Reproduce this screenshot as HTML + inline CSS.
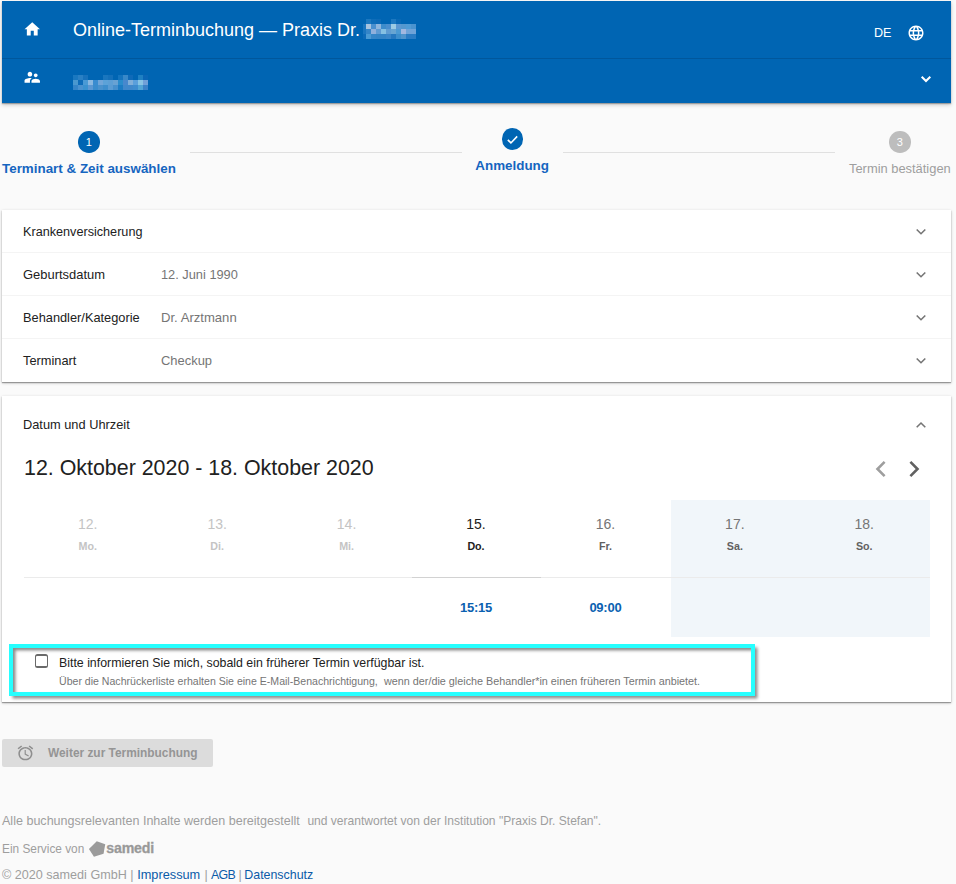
<!DOCTYPE html>
<html lang="de">
<head>
<meta charset="utf-8">
<title>Online-Terminbuchung</title>
<style>
*{box-sizing:border-box;margin:0;padding:0}
html,body{width:956px;height:884px;overflow:hidden;background:#fafafa;font-family:"Liberation Sans",Arial,sans-serif;color:#212121}
body{position:relative}
.abs{position:absolute}
.hdr{left:2px;top:1px;width:949px;height:102px;background:#0065b3;box-shadow:0 1px 1px rgba(0,0,0,.25),0 2px 4px rgba(0,0,0,.2)}
.hdr .div{position:absolute;left:0;right:0;top:57px;height:1px;background:#00579c}
.title{left:73px;top:19px;font-size:18px;color:#fff;white-space:nowrap;line-height:22px}
.de{left:874px;top:26px;font-size:12.600px;color:#fff;line-height:15px}
.card{left:2px;width:949px;background:#fff;box-shadow:0 1px 1px rgba(0,0,0,.3),0 1px 3px rgba(0,0,0,.22)}
.row{position:absolute;left:0;width:949px;height:43px;border-bottom:1px solid #f4f4f4}
.lbl{position:absolute;left:21px;top:14px;font-size:12.8px;line-height:15px;color:#212121;white-space:nowrap}
.val{position:absolute;left:159px;top:14px;font-size:12.8px;line-height:15px;color:#757575;white-space:nowrap}
.step{font-size:13.400px;line-height:15px;white-space:nowrap}
.t{white-space:nowrap}
.day{text-align:center}
.dn{font-size:14px;line-height:16px;margin-left:-2px}
.dw{font-size:10.700px;line-height:13px;font-weight:bold;margin-top:8px;margin-left:-2px}
.tm{text-align:center;font-size:13px;line-height:15px;font-weight:bold;color:#0b61b1;margin-left:-1px;letter-spacing:-0.250px}
</style>
</head>
<body>
<div class="abs hdr"><div class="div"></div></div>
<svg class="abs" style="left:23.300px;top:20.300px" width="18.500" height="18.500" viewBox="0 0 24 24"><path fill="#fff" d="M10 20v-6h4v6h5v-8h3L12 3 2 12h3v8z"/></svg>
<div class="abs title">Online-Terminbuchung — Praxis Dr.</div>
<div class="abs de">DE</div>
<svg class="abs" style="left:906.500px;top:24.100px" width="18" height="18" viewBox="0 0 24 24"><path fill="#fff" d="M11.99 2C6.47 2 2 6.48 2 12s4.47 10 9.99 10C17.52 22 22 17.52 22 12S17.52 2 11.99 2zm6.93 6h-2.95c-.32-1.25-.78-2.45-1.38-3.56 1.84.63 3.37 1.91 4.33 3.56zM12 4.04c.83 1.2 1.48 2.53 1.91 3.96h-3.82c.43-1.43 1.08-2.76 1.91-3.96zM4.26 14C4.1 13.36 4 12.69 4 12s.1-1.36.26-2h3.38c-.08.66-.14 1.32-.14 2 0 .68.06 1.34.14 2H4.26zm.82 2h2.95c.32 1.25.78 2.45 1.38 3.56-1.84-.63-3.37-1.9-4.33-3.56zm2.95-8H5.08c.96-1.66 2.49-2.93 4.33-3.56C8.810 5.55 8.350 6.75 8.030 8zM12 19.960c-.83-1.2-1.48-2.53-1.91-3.96h3.82c-.43 1.430-1.080 2.760-1.910 3.960zM14.340 14H9.660c-.09-.66-.16-1.320-.16-2 0-.68.070-1.350.160-2h4.680c.09.650.160 1.320.160 2 0 .68-.070 1.340-.160 2zm.25 5.560c.6-1.110 1.060-2.310 1.380-3.560h2.950c-.96 1.650-2.490 2.930-4.330 3.560zM16.360 14c.08-.66.140-1.320.140-2 0-.68-.060-1.340-.140-2h3.380c.16.640.26 1.310.26 2s-.1 1.360-.26 2h-3.380z"/></svg>
<svg class="abs" style="left:23.300px;top:67.700px" width="18.500" height="18.500" viewBox="0 0 24 24"><path fill="#fff" d="M16.500 12c1.380 0 2.490-1.120 2.490-2.500S17.880 7 16.500 7C15.120 7 14 8.120 14 9.500s1.120 2.500 2.500 2.500zM9 11c1.660 0 2.990-1.340 2.990-3S10.660 5 9 5C7.340 5 6 6.340 6 8s1.340 3 3 3zm7.500 3c-1.830 0-5.500.920-5.500 2.750V19h11v-2.250c0-1.830-3.670-2.750-5.500-2.750zM9 13c-2.330 0-7 1.170-7 3.500V19h7v-2.250c0-.850.330-2.340 2.370-3.470C10.500 13.100 9.660 13 9 13z"/></svg>
<svg class="abs" style="left:919px;top:74px" width="14" height="10" viewBox="0 0 14 10"><path fill="none" stroke="#fff" stroke-width="2" d="M2.700 2.700l4.300 4.300 4.300-4.300"/></svg>

<svg class="abs" style="left:0;top:0" width="956" height="104" viewBox="0 0 956 104" shape-rendering="crispEdges"><rect x="366" y="19" width="5" height="5" fill="#1c78c0"/><rect x="371" y="19" width="5" height="5" fill="#0e6db9"/><rect x="376" y="19" width="5" height="5" fill="#0c6ab7"/><rect x="391" y="19" width="5" height="5" fill="#1c78c0"/><rect x="396" y="19" width="5" height="5" fill="#0868b5"/><rect x="363" y="24" width="3" height="5" fill="#1a76c0"/><rect x="366" y="24" width="5" height="5" fill="#a8c4e0"/><rect x="371" y="24" width="5" height="5" fill="#4a90cf"/><rect x="376" y="24" width="5" height="5" fill="#8fb6dd"/><rect x="381" y="24" width="5" height="5" fill="#3d8ccb"/><rect x="386" y="24" width="5" height="5" fill="#4a8ecd"/><rect x="391" y="24" width="5" height="5" fill="#9ccbe4"/><rect x="396" y="24" width="5" height="5" fill="#5c98d2"/><rect x="401" y="24" width="5" height="5" fill="#5598cf"/><rect x="406" y="24" width="5" height="5" fill="#509bd5"/><rect x="411" y="24" width="5" height="5" fill="#4a93cf"/><rect x="363" y="29" width="3" height="5" fill="#1a76c0"/><rect x="366" y="29" width="5" height="5" fill="#3585c8"/><rect x="371" y="29" width="5" height="5" fill="#8fb0dc"/><rect x="376" y="29" width="5" height="5" fill="#5f9bd3"/><rect x="381" y="29" width="5" height="5" fill="#85c0e2"/><rect x="386" y="29" width="5" height="5" fill="#5f9cd2"/><rect x="391" y="29" width="5" height="5" fill="#68a5d2"/><rect x="396" y="29" width="5" height="5" fill="#4c9ad3"/><rect x="401" y="29" width="5" height="5" fill="#a3b8e0"/><rect x="406" y="29" width="5" height="5" fill="#6fa3d8"/><rect x="411" y="29" width="5" height="5" fill="#6fa3d8"/><rect x="363" y="34" width="3" height="5" fill="#0c6ab8"/><rect x="366" y="34" width="5" height="5" fill="#4a9ad3"/><rect x="371" y="34" width="5" height="5" fill="#3586c8"/><rect x="376" y="34" width="5" height="5" fill="#3384c6"/><rect x="381" y="34" width="5" height="5" fill="#3384c6"/><rect x="386" y="34" width="5" height="5" fill="#3a86c8"/><rect x="391" y="34" width="5" height="5" fill="#2678bf"/><rect x="396" y="34" width="5" height="5" fill="#3d8ecb"/><rect x="401" y="34" width="5" height="5" fill="#4f94cc"/><rect x="406" y="34" width="5" height="5" fill="#2a7cc4"/><rect x="411" y="34" width="5" height="5" fill="#2a7cc4"/><rect x="73" y="75" width="5" height="5" fill="#1a78c0"/><rect x="78" y="75" width="5" height="5" fill="#2a80c4"/><rect x="83" y="75" width="5" height="5" fill="#1872bc"/><rect x="103" y="75" width="5" height="5" fill="#1a76be"/><rect x="108" y="75" width="5" height="5" fill="#1470ba"/><rect x="118" y="75" width="5" height="5" fill="#1474be"/><rect x="123" y="75" width="5" height="5" fill="#3888c8"/><rect x="128" y="75" width="5" height="5" fill="#0f6ab8"/><rect x="138" y="75" width="5" height="5" fill="#1f80c2"/><rect x="143" y="75" width="5" height="5" fill="#0a66b6"/><rect x="73" y="80" width="5" height="5" fill="#4a98cf"/><rect x="78" y="80" width="5" height="5" fill="#0e6cb9"/><rect x="83" y="80" width="5" height="5" fill="#4a9ad5"/><rect x="88" y="80" width="5" height="5" fill="#8ab8e0"/><rect x="93" y="80" width="5" height="5" fill="#3a8cd0"/><rect x="98" y="80" width="5" height="5" fill="#70a5d8"/><rect x="103" y="80" width="5" height="5" fill="#5ca2d8"/><rect x="108" y="80" width="5" height="5" fill="#5c9fd5"/><rect x="113" y="80" width="5" height="5" fill="#68a2d3"/><rect x="118" y="80" width="5" height="5" fill="#2a8ccb"/><rect x="123" y="80" width="5" height="5" fill="#4888cd"/><rect x="128" y="80" width="5" height="5" fill="#80aed8"/><rect x="133" y="80" width="5" height="5" fill="#5a9fdb"/><rect x="138" y="80" width="5" height="5" fill="#88c4e4"/><rect x="143" y="80" width="5" height="5" fill="#70a0d8"/><rect x="73" y="85" width="5" height="5" fill="#3585c8"/><rect x="78" y="85" width="5" height="5" fill="#4a92cf"/><rect x="83" y="85" width="5" height="5" fill="#3a92d0"/><rect x="88" y="85" width="5" height="5" fill="#5c98d3"/><rect x="93" y="85" width="5" height="5" fill="#3a8ccd"/><rect x="98" y="85" width="5" height="5" fill="#4a92cd"/><rect x="103" y="85" width="5" height="5" fill="#3d8ecd"/><rect x="108" y="85" width="5" height="5" fill="#5a9cd3"/><rect x="113" y="85" width="5" height="5" fill="#4690cd"/><rect x="118" y="85" width="5" height="5" fill="#1c7cc4"/><rect x="123" y="85" width="5" height="5" fill="#4088cb"/><rect x="128" y="85" width="5" height="5" fill="#4088cb"/><rect x="133" y="85" width="5" height="5" fill="#3d8ccf"/><rect x="138" y="85" width="5" height="5" fill="#52a5d5"/><rect x="143" y="85" width="5" height="5" fill="#3a82c8"/></svg>
<!-- stepper -->
<div class="abs" style="left:78px;top:131.400px;width:21.600px;height:21.600px;border-radius:50%;background:#0065b3;color:#fff;font-size:11px;line-height:22px;text-align:center">1</div>
<div class="abs step" style="left:2px;top:161px;color:#1565c0;font-weight:bold">Terminart &amp; Zeit auswählen</div>
<div class="abs" style="left:190px;top:152px;width:272px;height:1px;background:#e0e0e0"></div>
<div class="abs" style="left:501.700px;top:128.200px;width:21.500px;height:21.600px;border-radius:50%;background:#0065b3"></div>
<svg class="abs" style="left:505px;top:131.500px" width="15" height="15" viewBox="0 0 24 24"><path fill="none" stroke="#fff" stroke-width="2.6" d="M4.500 12.500l5 5 10-10.500"/></svg>
<div class="abs step" style="left:475.300px;top:158px;color:#1565c0;font-weight:bold">Anmeldung</div>
<div class="abs" style="left:563px;top:152px;width:272px;height:1px;background:#e0e0e0"></div>
<div class="abs" style="left:889px;top:131.400px;width:21.600px;height:21.600px;border-radius:50%;background:#bdbdbd;color:#fff;font-size:11px;line-height:22px;text-align:center">3</div>
<div class="abs step" style="left:849px;top:161px;color:#9e9e9e;font-size:12.900px">Termin bestätigen</div>

<!-- card 1 -->
<div class="abs card" style="top:210px;height:172px">
  <div class="row" style="top:0"><span class="lbl" style="font-size:12.650px;top:14.700px">Krankenversicherung</span></div>
  <div class="row" style="top:43px"><span class="lbl" style="font-size:12.950px">Geburtsdatum</span><span class="val">12. Juni 1990</span></div>
  <div class="row" style="top:86px"><span class="lbl">Behandler/Kategorie</span><span class="val" style="font-size:13.100px">Dr. Arztmann</span></div>
  <div class="row" style="top:129px;border-bottom:0"><span class="lbl">Terminart</span><span class="val" style="font-size:12.950px">Checkup</span></div>
</div>

<!-- card 2 -->
<div class="abs card" style="top:396px;height:306px">
  <span class="lbl" style="top:21px">Datum und Uhrzeit</span>
</div>
<div class="abs t" style="left:24px;top:456px;font-size:21.4px;line-height:24px;color:#212121">12. Oktober 2020 - 18. Oktober 2020</div>

<div class="abs" style="left:671px;top:500px;width:259px;height:137px;background:#f1f6fa"></div>
<div class="abs" style="left:24px;top:577px;width:906px;height:1px;background:#ebebeb"></div>
<div class="abs" style="left:412px;top:577px;width:129px;height:1px;background:#d2d2d2"></div>

<div class="abs day" style="left:24.00px;top:515.500px;width:129.43px;color:#c4c4c4"><div class="dn">12.</div><div class="dw" style="color:#c4c4c4">Mo.</div></div>
<div class="abs day" style="left:153.43px;top:515.500px;width:129.43px;color:#c4c4c4"><div class="dn">13.</div><div class="dw" style="color:#c4c4c4">Di.</div></div>
<div class="abs day" style="left:282.86px;top:515.500px;width:129.43px;color:#c4c4c4"><div class="dn">14.</div><div class="dw" style="color:#c4c4c4">Mi.</div></div>
<div class="abs day" style="left:412.29px;top:515.500px;width:129.43px;color:#212121"><div class="dn">15.</div><div class="dw" style="color:#212121">Do.</div></div>
<div class="abs day" style="left:541.71px;top:515.500px;width:129.43px;color:#757575"><div class="dn">16.</div><div class="dw" style="color:#616161">Fr.</div></div>
<div class="abs day" style="left:671.14px;top:515.500px;width:129.43px;color:#757575"><div class="dn">17.</div><div class="dw" style="color:#616161">Sa.</div></div>
<div class="abs day" style="left:800.57px;top:515.500px;width:129.43px;color:#757575"><div class="dn">18.</div><div class="dw" style="color:#616161">So.</div></div>
<div class="abs tm" style="left:412.300px;top:600px;width:129.4px">15:15</div>
<div class="abs tm" style="left:541.700px;top:600px;width:129.4px">09:00</div>
<div class="abs" style="left:9px;top:644px;width:746px;height:52px;border:4px solid #26ffff;box-shadow:2.500px 2.500px 3px rgba(0,0,0,.45), inset 2.500px 2.500px 3px rgba(0,0,0,.45)"></div>
<div class="abs" style="left:34.600px;top:654.200px;width:13.500px;height:14px;border:solid #6a6a6a;border-width:2px 1.600px;border-radius:2.500px"></div>
<div class="abs t" style="left:59px;top:656px;font-size:12.350px;line-height:15px;color:#212121">Bitte informieren Sie mich, sobald ein früherer Termin verfügbar ist.</div>
<div class="abs t" style="left:59px;top:675px;font-size:10.700px;line-height:12px;color:#757575"><span style="font-size:10.570px;line-height:0">Über die Nachrückerliste erhalten Sie eine E-Mail-Benachrichtigung,</span></div>
<div class="abs t" style="left:384px;top:675px;font-size:10.700px;line-height:12px;color:#757575"><span style="font-size:10.810px;line-height:0">wenn der/die gleiche Behandler*in einen früheren Termin anbietet.</span></div>
<svg class="abs" style="left:915px;top:227.5px" width="12" height="8" viewBox="0 0 12 8"><path fill="none" stroke="#757575" stroke-width="1.6" d="M1.700 1.500L6 5.700l4.300-4.200"/></svg>
<svg class="abs" style="left:915px;top:270.5px" width="12" height="8" viewBox="0 0 12 8"><path fill="none" stroke="#757575" stroke-width="1.6" d="M1.700 1.500L6 5.700l4.300-4.200"/></svg>
<svg class="abs" style="left:915px;top:313.5px" width="12" height="8" viewBox="0 0 12 8"><path fill="none" stroke="#757575" stroke-width="1.6" d="M1.700 1.500L6 5.700l4.300-4.200"/></svg>
<svg class="abs" style="left:915px;top:356.5px" width="12" height="8" viewBox="0 0 12 8"><path fill="none" stroke="#757575" stroke-width="1.6" d="M1.700 1.500L6 5.700l4.300-4.200"/></svg>
<svg class="abs" style="left:915px;top:420.800px" width="12" height="8" viewBox="0 0 12 8"><path fill="none" stroke="#757575" stroke-width="1.6" d="M1.700 6.200L6 2l4.300 4.200"/></svg>
<svg class="abs" style="left:875px;top:460.300px" width="12" height="18" viewBox="0 0 12 18"><path fill="none" stroke="#9e9e9e" stroke-width="2.600" d="M9.600 1.900L2.500 9l7.100 7.100"/></svg>
<svg class="abs" style="left:907.500px;top:460.300px" width="12" height="18" viewBox="0 0 12 18"><path fill="none" stroke="#616161" stroke-width="2.600" d="M2.400 1.900L9.500 9l-7.100 7.100"/></svg>
<!-- footer -->
<div class="abs" style="left:2px;top:739px;width:211px;height:28px;background:#dcdcdc;border-radius:2px"></div>
<svg class="abs" style="left:15.900px;top:744.300px" width="18.800" height="17.800" viewBox="0 0 24 24" preserveAspectRatio="none"><path fill="#8e8e8e" d="M22 5.720l-4.600-3.860-1.290 1.530 4.600 3.860L22 5.720zM7.880 3.390L6.600 1.860 2 5.710l1.290 1.530 4.590-3.850zM12.500 8H11v6l4.750 2.850.750-1.230-4-2.370V8zM12 4c-4.970 0-9 4.030-9 9s4.020 9 9 9c4.970 0 9-4.030 9-9s-4.030-9-9-9zm0 16c-3.870 0-7-3.130-7-7s3.130-7 7-7 7 3.130 7 7-3.130 7-7 7z"/></svg>
<div class="abs t" style="left:48px;top:746px;font-size:11.900px;line-height:15px;font-weight:bold;color:#959595">Weiter zur Terminbuchung</div>
<div class="abs t" style="left:2px;top:814px;font-size:12.500px;line-height:15px;color:#9e9e9e"><span style="font-size:12.550px;line-height:0">Alle buchungsrelevanten Inhalte werden bereitgestellt</span></div>
<div class="abs t" style="left:307.400px;top:814px;font-size:12.500px;line-height:15px;color:#9e9e9e"><span style="font-size:12.050px;line-height:0">und verantwortet von der Institution "Praxis Dr. Stefan".</span></div>
<div class="abs t" style="left:2px;top:841.500px;font-size:11.850px;line-height:15px;color:#9e9e9e">Ein Service von</div>
<svg class="abs" style="left:88px;top:840px" width="18" height="18" viewBox="88 840 18 18"><path fill="#9b9b9b" d="M96.760 841.130L105.240 844.240L103.540 853.850L93.940 856.670L88.950 848.950Z"/></svg>
<div class="abs t" style="left:106.300px;top:840px;font-size:14.200px;line-height:17px;font-weight:bold;letter-spacing:-0.200px;color:#999;-webkit-text-stroke:0.300px #999">samedi</div>
<div class="abs t" style="left:2px;top:868px;font-size:12.500px;line-height:15px;color:#9e9e9e"><span style="font-size:12.600px;line-height:0">© 2020 samedi GmbH |</span></div>
<div class="abs t" style="left:137.200px;top:868px;font-size:12.500px;line-height:15px;color:#0b5aa8"><span style="font-size:12.750px;line-height:0">Impressum</span></div>
<div class="abs t" style="left:204.500px;top:868px;font-size:12.500px;line-height:15px;color:#9e9e9e"><span style="font-size:12.500px;line-height:0">|</span></div>
<div class="abs t" style="left:210.900px;top:868px;font-size:12.500px;line-height:15px;color:#0b5aa8"><span style="font-size:12.400px;line-height:0;letter-spacing:-0.600px">AGB</span></div>
<div class="abs t" style="left:238.500px;top:868px;font-size:12.500px;line-height:15px;color:#9e9e9e"><span style="font-size:12.500px;line-height:0">|</span></div>
<div class="abs t" style="left:244.300px;top:868px;font-size:12.500px;line-height:15px;color:#0b5aa8"><span style="font-size:12.400px;line-height:0">Datenschutz</span></div>
</body>
</html>
